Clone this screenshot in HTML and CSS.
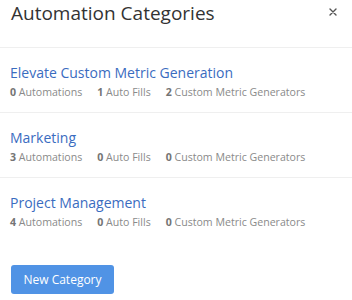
FILE: index.html
```html
<!DOCTYPE html>
<html lang="en">
<head>
    <meta charset="UTF-8">
    <title>Automation Categories</title>
    <link rel="stylesheet" href="styles.css">
</head>
<body>
    <div class="modal">
        <div class="modal-header">
            <div class="modal-title">Automation Categories</div>
            <button class="close-button" aria-label="Close">
                <svg width="8" height="8" viewBox="0 0 8 8"><path d="M1 1L7 7M7 1L1 7" stroke="#555" stroke-width="1.4" stroke-linecap="round"/></svg>
            </button>
        </div>
        <div class="category-list">
            <div class="category">
                <a class="category-name" href="#">Elevate Custom Metric Generation</a>
                <div class="category-stats">
                    <span><b>0</b> Automations</span>
                    <span><b>1</b> Auto Fills</span>
                    <span><b>2</b> Custom Metric Generators</span>
                </div>
            </div>
            <div class="category">
                <a class="category-name" href="#">Marketing</a>
                <div class="category-stats">
                    <span><b>3</b> Automations</span>
                    <span><b>0</b> Auto Fills</span>
                    <span><b>0</b> Custom Metric Generators</span>
                </div>
            </div>
            <div class="category">
                <a class="category-name" href="#">Project Management</a>
                <div class="category-stats">
                    <span><b>4</b> Automations</span>
                    <span><b>0</b> Auto Fills</span>
                    <span><b>0</b> Custom Metric Generators</span>
                </div>
            </div>
        </div>
        <div class="modal-footer">
            <button class="new-category">New Category</button>
        </div>
    </div>
</body>
</html>
```

FILE: styles.css
```css
body {
    margin: 0;
    font-family: 'Open Sans', sans-serif;
    background: #fff;
    color: #333;
}

.modal {
    width: 352px;
}

.modal-header {
    display: flex;
    justify-content: space-between;
    align-items: flex-start;
    height: 48px;
    padding: 0 15px 0 11px;
    border-bottom: 1px solid #efefef;
    box-sizing: border-box;
}

.modal-title {
    font-size: 19px;
    line-height: 26px;
    color: #333;
}

.close-button {
    display: flex;
    background: none;
    border: none;
    padding: 0;
    margin-top: 8px;
    cursor: pointer;
}

.category {
    padding: 15px 10px 12px;
    border-bottom: 1px solid #efefef;
}

.category:last-child {
    border-bottom: none;
}

.category-name {
    display: block;
    font-size: 14px;
    line-height: 19px;
    color: #3a6cbf;
    text-decoration: none;
}

.category-stats {
    display: flex;
    gap: 15px;
    margin-top: 3px;
    font-size: 10.6px;
    line-height: 15px;
    color: #8a8a8a;
}

.category-stats b {
    color: #747474;
}

.modal-footer {
    padding: 23px 11px;
}

.new-category {
    width: 103px;
    height: 29px;
    padding: 0;
    background: #5093e5;
    color: #fff;
    border: none;
    border-radius: 3px;
    font-family: 'Open Sans', sans-serif;
    font-size: 12px;
    cursor: pointer;
}
```
